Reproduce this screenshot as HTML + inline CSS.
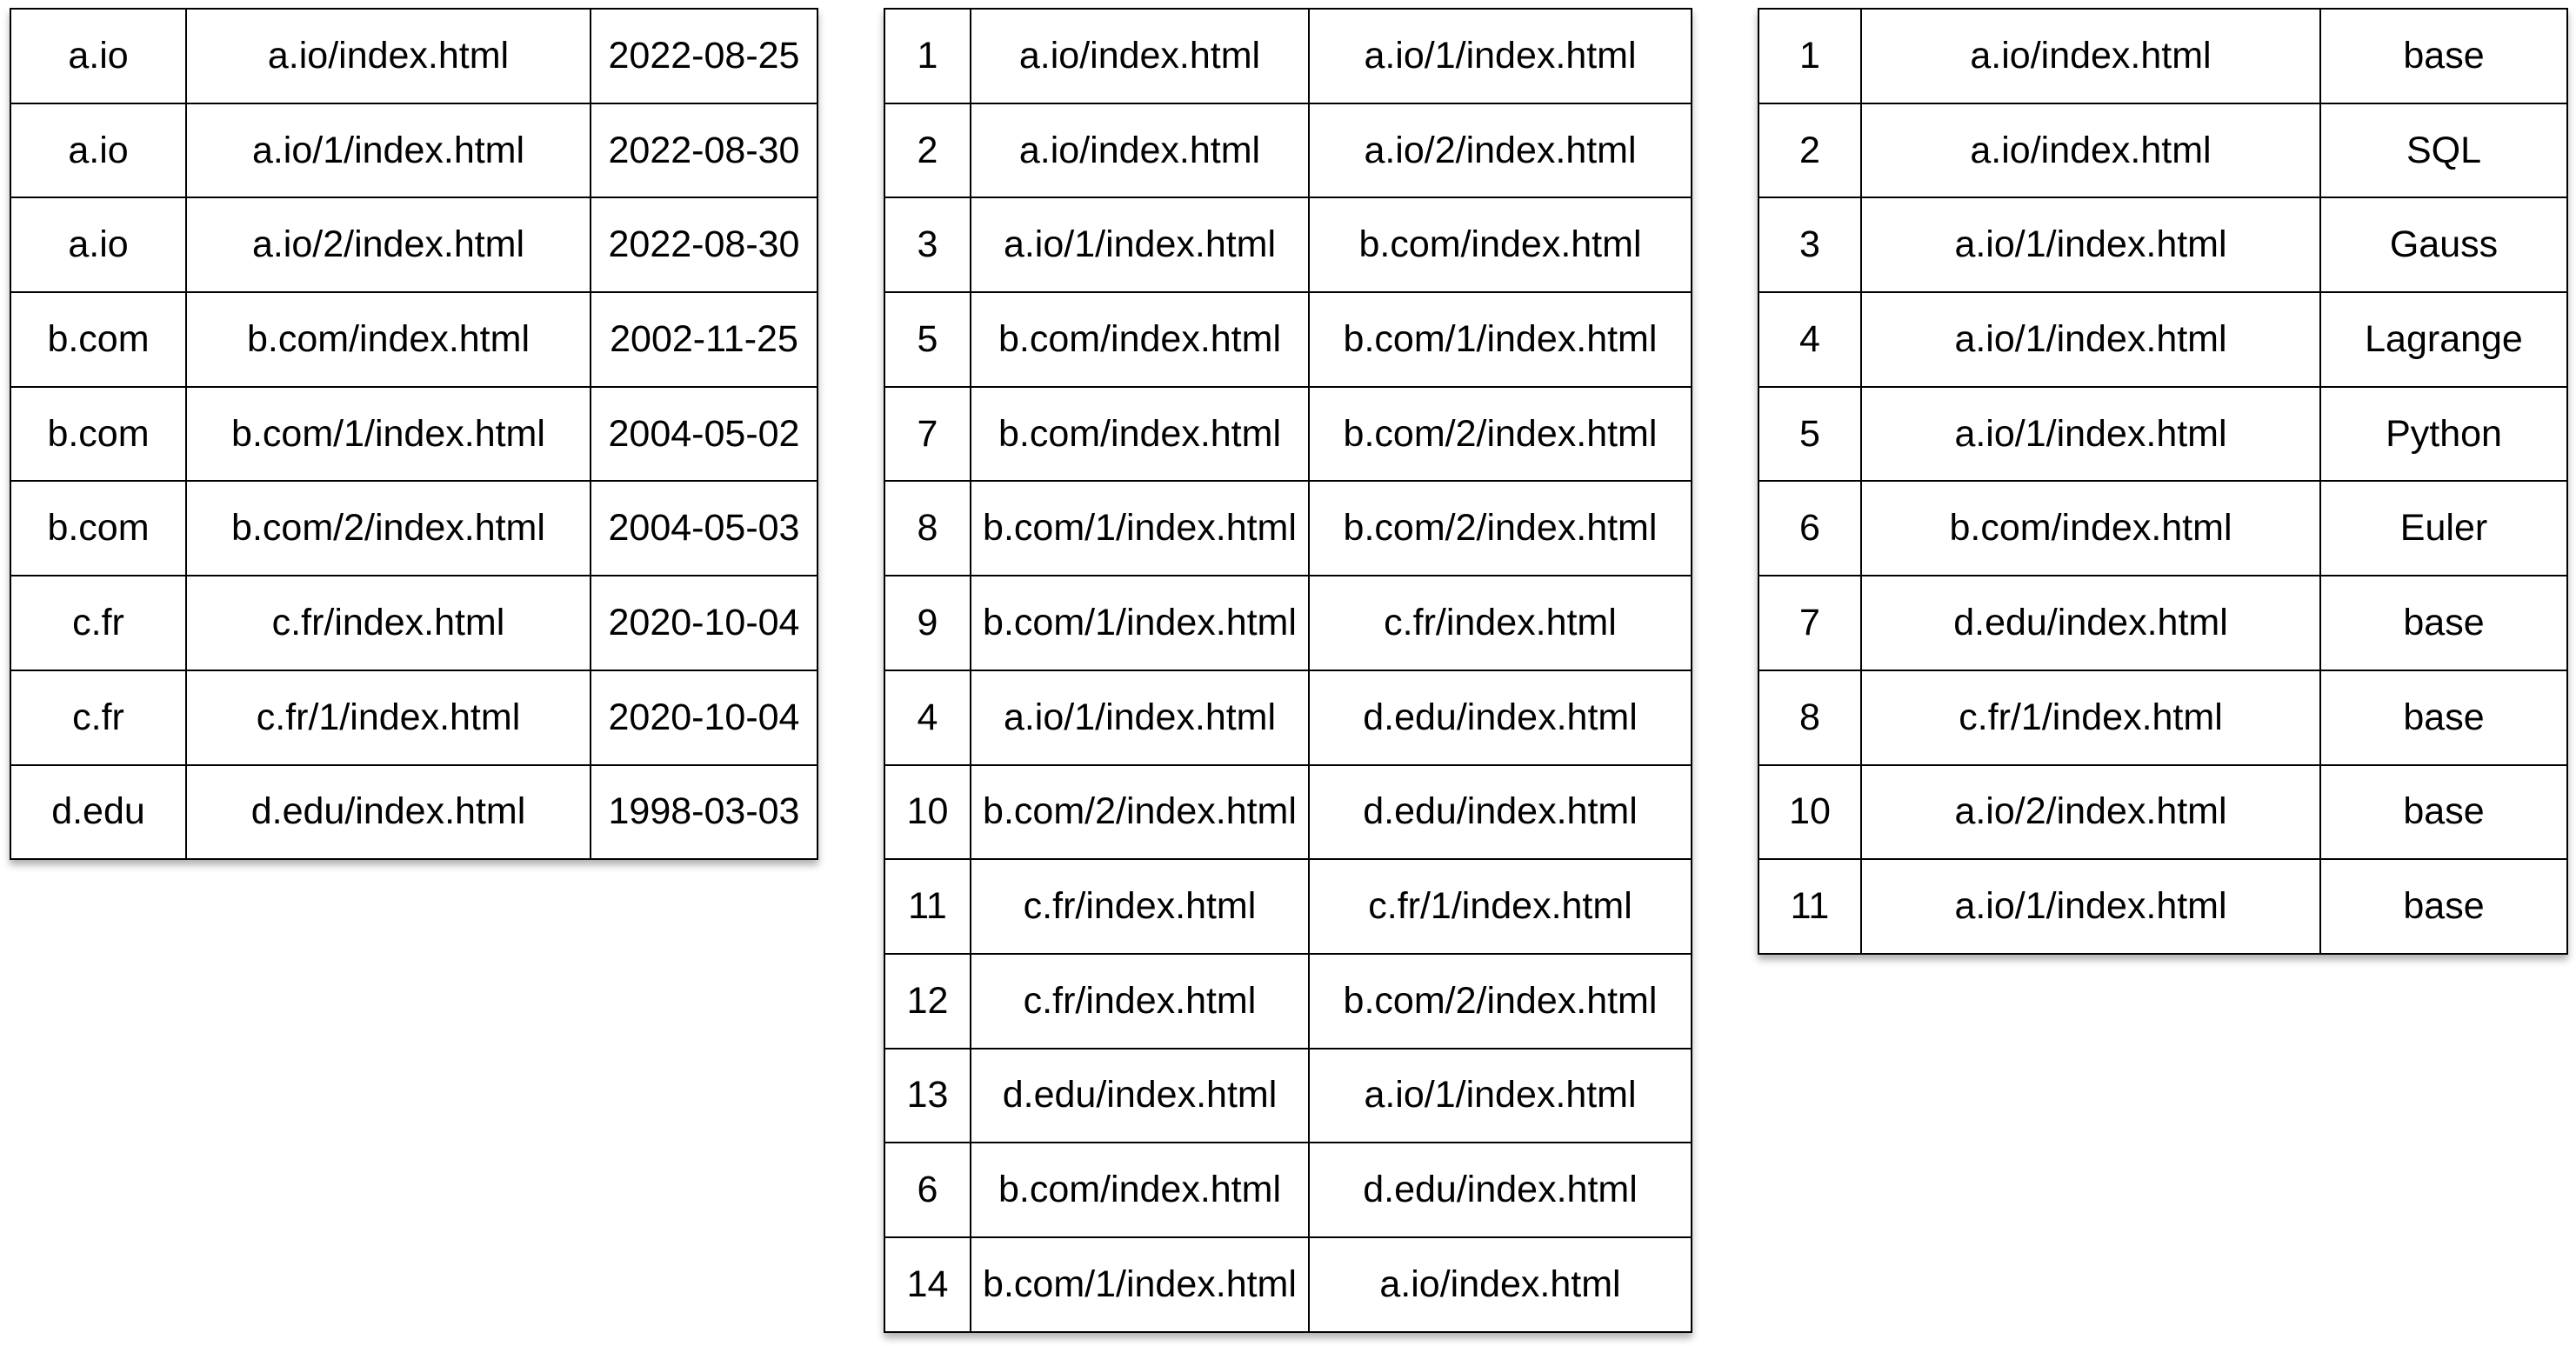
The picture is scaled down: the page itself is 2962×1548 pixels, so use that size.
<!DOCTYPE html>
<html><head><meta charset="utf-8"><style>
html,body{margin:0;padding:0;background:#fff;width:2962px;height:1548px;overflow:hidden;}
table{position:absolute;border-collapse:collapse;font-family:"Liberation Sans",Arial,sans-serif;font-size:43px;color:#000;box-shadow:0 6px 8px rgba(0,0,0,0.3);background:#fff;table-layout:fixed;}
td{border:2px solid #000;text-align:center;vertical-align:middle;padding:0;height:106.7px;box-sizing:border-box;white-space:nowrap;overflow:hidden;}
tr{height:108.7px;}
</style></head><body>
<table style="left:11px;top:9px;width:928px;">
<colgroup><col style="width:202px"><col style="width:465px"><col style="width:261px"></colgroup>
<tr><td>a.io</td><td>a.io/index.html</td><td>2022-08-25</td></tr>
<tr><td>a.io</td><td>a.io/1/index.html</td><td>2022-08-30</td></tr>
<tr><td>a.io</td><td>a.io/2/index.html</td><td>2022-08-30</td></tr>
<tr><td>b.com</td><td>b.com/index.html</td><td>2002-11-25</td></tr>
<tr><td>b.com</td><td>b.com/1/index.html</td><td>2004-05-02</td></tr>
<tr><td>b.com</td><td>b.com/2/index.html</td><td>2004-05-03</td></tr>
<tr><td>c.fr</td><td>c.fr/index.html</td><td>2020-10-04</td></tr>
<tr><td>c.fr</td><td>c.fr/1/index.html</td><td>2020-10-04</td></tr>
<tr><td>d.edu</td><td>d.edu/index.html</td><td>1998-03-03</td></tr>
</table>
<table style="left:1016px;top:9px;width:928px;">
<colgroup><col style="width:99px"><col style="width:389px"><col style="width:440px"></colgroup>
<tr><td>1</td><td>a.io/index.html</td><td>a.io/1/index.html</td></tr>
<tr><td>2</td><td>a.io/index.html</td><td>a.io/2/index.html</td></tr>
<tr><td>3</td><td>a.io/1/index.html</td><td>b.com/index.html</td></tr>
<tr><td>5</td><td>b.com/index.html</td><td>b.com/1/index.html</td></tr>
<tr><td>7</td><td>b.com/index.html</td><td>b.com/2/index.html</td></tr>
<tr><td>8</td><td>b.com/1/index.html</td><td>b.com/2/index.html</td></tr>
<tr><td>9</td><td>b.com/1/index.html</td><td>c.fr/index.html</td></tr>
<tr><td>4</td><td>a.io/1/index.html</td><td>d.edu/index.html</td></tr>
<tr><td>10</td><td>b.com/2/index.html</td><td>d.edu/index.html</td></tr>
<tr><td>11</td><td>c.fr/index.html</td><td>c.fr/1/index.html</td></tr>
<tr><td>12</td><td>c.fr/index.html</td><td>b.com/2/index.html</td></tr>
<tr><td>13</td><td>d.edu/index.html</td><td>a.io/1/index.html</td></tr>
<tr><td>6</td><td>b.com/index.html</td><td>d.edu/index.html</td></tr>
<tr><td>14</td><td>b.com/1/index.html</td><td>a.io/index.html</td></tr>
</table>
<table style="left:2021px;top:9px;width:930px;">
<colgroup><col style="width:118px"><col style="width:528px"><col style="width:284px"></colgroup>
<tr><td>1</td><td>a.io/index.html</td><td>base</td></tr>
<tr><td>2</td><td>a.io/index.html</td><td>SQL</td></tr>
<tr><td>3</td><td>a.io/1/index.html</td><td>Gauss</td></tr>
<tr><td>4</td><td>a.io/1/index.html</td><td>Lagrange</td></tr>
<tr><td>5</td><td>a.io/1/index.html</td><td>Python</td></tr>
<tr><td>6</td><td>b.com/index.html</td><td>Euler</td></tr>
<tr><td>7</td><td>d.edu/index.html</td><td>base</td></tr>
<tr><td>8</td><td>c.fr/1/index.html</td><td>base</td></tr>
<tr><td>10</td><td>a.io/2/index.html</td><td>base</td></tr>
<tr><td>11</td><td>a.io/1/index.html</td><td>base</td></tr>
</table>
</body></html>
